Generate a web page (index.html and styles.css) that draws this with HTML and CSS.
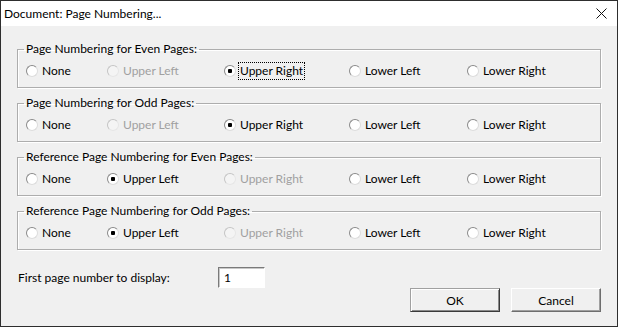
FILE: index.html
```html
<!doctype html>
<html lang="en">
<head>
    <meta charset="utf-8">
    <title>Document: Page Numbering...</title>
    <link rel="stylesheet" href="styles.css">
</head>
<body>
    <div class="window">
        <div class="titlebar">
            <span class="title">Document: Page Numbering...</span>
            <svg class="close" width="11" height="11" viewBox="0 0 11 11">
                <path d="M0.5 0.5L10.5 10.5M10.5 0.5L0.5 10.5" stroke="#111" stroke-width="1"/>
            </svg>
        </div>
        <div class="content">
            <fieldset class="group">
                <legend>Page Numbering for Even Pages:</legend>
                <div class="options">
                    <label class="option"><input type="radio" name="even"> None</label>
                    <label class="option disabled"><input type="radio" name="even" disabled> Upper Left</label>
                    <label class="option"><input type="radio" name="even" checked> <span class="focus">Upper Right</span></label>
                    <label class="option"><input type="radio" name="even"> Lower Left</label>
                    <label class="option"><input type="radio" name="even"> Lower Right</label>
                </div>
            </fieldset>
            <fieldset class="group">
                <legend>Page Numbering for Odd Pages:</legend>
                <div class="options">
                    <label class="option"><input type="radio" name="odd"> None</label>
                    <label class="option disabled"><input type="radio" name="odd" disabled> Upper Left</label>
                    <label class="option"><input type="radio" name="odd" checked> Upper Right</label>
                    <label class="option"><input type="radio" name="odd"> Lower Left</label>
                    <label class="option"><input type="radio" name="odd"> Lower Right</label>
                </div>
            </fieldset>
            <fieldset class="group">
                <legend>Reference Page Numbering for Even Pages:</legend>
                <div class="options">
                    <label class="option"><input type="radio" name="refeven"> None</label>
                    <label class="option"><input type="radio" name="refeven" checked> Upper Left</label>
                    <label class="option disabled"><input type="radio" name="refeven" disabled> Upper Right</label>
                    <label class="option"><input type="radio" name="refeven"> Lower Left</label>
                    <label class="option"><input type="radio" name="refeven"> Lower Right</label>
                </div>
            </fieldset>
            <fieldset class="group">
                <legend>Reference Page Numbering for Odd Pages:</legend>
                <div class="options">
                    <label class="option"><input type="radio" name="refodd"> None</label>
                    <label class="option"><input type="radio" name="refodd" checked> Upper Left</label>
                    <label class="option disabled"><input type="radio" name="refodd" disabled> Upper Right</label>
                    <label class="option"><input type="radio" name="refodd"> Lower Left</label>
                    <label class="option"><input type="radio" name="refodd"> Lower Right</label>
                </div>
            </fieldset>

            <div class="start-row">
                <label class="start-label" for="first">First page number to display:</label>
                <input class="number" id="first" type="text" value="1">
            </div>
            <div class="buttons">
                <button type="button" class="btn default">OK</button>
                <button type="button" class="btn">Cancel</button>
            </div>
        </div>
    </div>
</body>
</html>
```

FILE: styles.css
```css
html, body {
    margin: 0;
    padding: 0;
}

body {
    font-family: Lato, "Noto Sans", sans-serif;
    font-size: 12px;
    color: #000;
}

.window {
    width: 618px;
    height: 327px;
    box-sizing: border-box;
    border: 1px solid #2e2e2e;
    background: #f0f0f0;
}

.titlebar {
    height: 25px;
    background: #fff;
    display: flex;
    align-items: center;
    justify-content: space-between;
    padding: 0 10px 0 3px;
}

.title {
    line-height: 25px;
}

.close {
    display: block;
    margin-top: -1px;
}

.content {
    padding: 15px 16px 0 16px;
}

.group {
    margin: 0 0 7px 0;
    padding: 6px 8px 8px 8px;
    border: 1px solid #adadad;
    box-shadow: inset 1px 1px 0 #fff, 1px 1px 0 #fff;
}

.group legend {
    padding: 0 2px;
    margin-left: -2px;
    line-height: 16px;
}

.options {
    display: grid;
    grid-template-columns: 81px 117px 125px 118px 1fr;
    height: 16px;
}

.option {
    display: flex;
    align-items: center;
    line-height: 16px;
    white-space: nowrap;
}

.option input {
    appearance: none;
    -webkit-appearance: none;
    width: 12px;
    height: 12px;
    margin: 0 4px 0 0;
    border-radius: 50%;
    box-sizing: border-box;
    border: 1px solid;
    border-color: #8a8a8a #dcdcdc #dcdcdc #8a8a8a;
    background: #fff;
}

.option input:checked {
    background: radial-gradient(circle, #000 0, #000 2px, #fff 2.5px);
}

.option.disabled {
    color: #a0a0a0;
}

.option.disabled input {
    border-color: #c4c4c4 #e6e6e6 #e6e6e6 #c4c4c4;
    background: #f4f4f4;
}

.focus {
    outline: 1px dotted #000;
    outline-offset: 0;
    padding: 0 1px;
    margin-left: -1px;
}

.start-row {
    display: flex;
    align-items: center;
    margin-top: 17px;
    padding-left: 1px;
}

.start-label {
    width: 200px;
}

.number {
    width: 47px;
    height: 21px;
    box-sizing: border-box;
    margin: 0;
    padding: 0 5px;
    font: inherit;
    border: 1px solid;
    border-color: #7a7a7a #fff #fff #7a7a7a;
    box-shadow: inset 1px 1px 0 #c8c8c8;
    background: #fff;
}

.buttons {
    display: flex;
    justify-content: flex-end;
    gap: 11px;
    margin-top: 0;
}

.btn {
    width: 90px;
    height: 24px;
    margin: 0;
    padding: 0;
    font: inherit;
    background: #f0f0f0;
    border: 1px solid;
    border-color: #fff #6e6e6e #6e6e6e #fff;
    box-shadow: inset -1px -1px 0 #a0a0a0;
}

.btn.default {
    border-color: #a0a0a0 #3a3a3a #3a3a3a #a0a0a0;
    box-shadow: inset 1px 1px 0 #fff, inset -1px -1px 0 #8a8a8a;
}
```
